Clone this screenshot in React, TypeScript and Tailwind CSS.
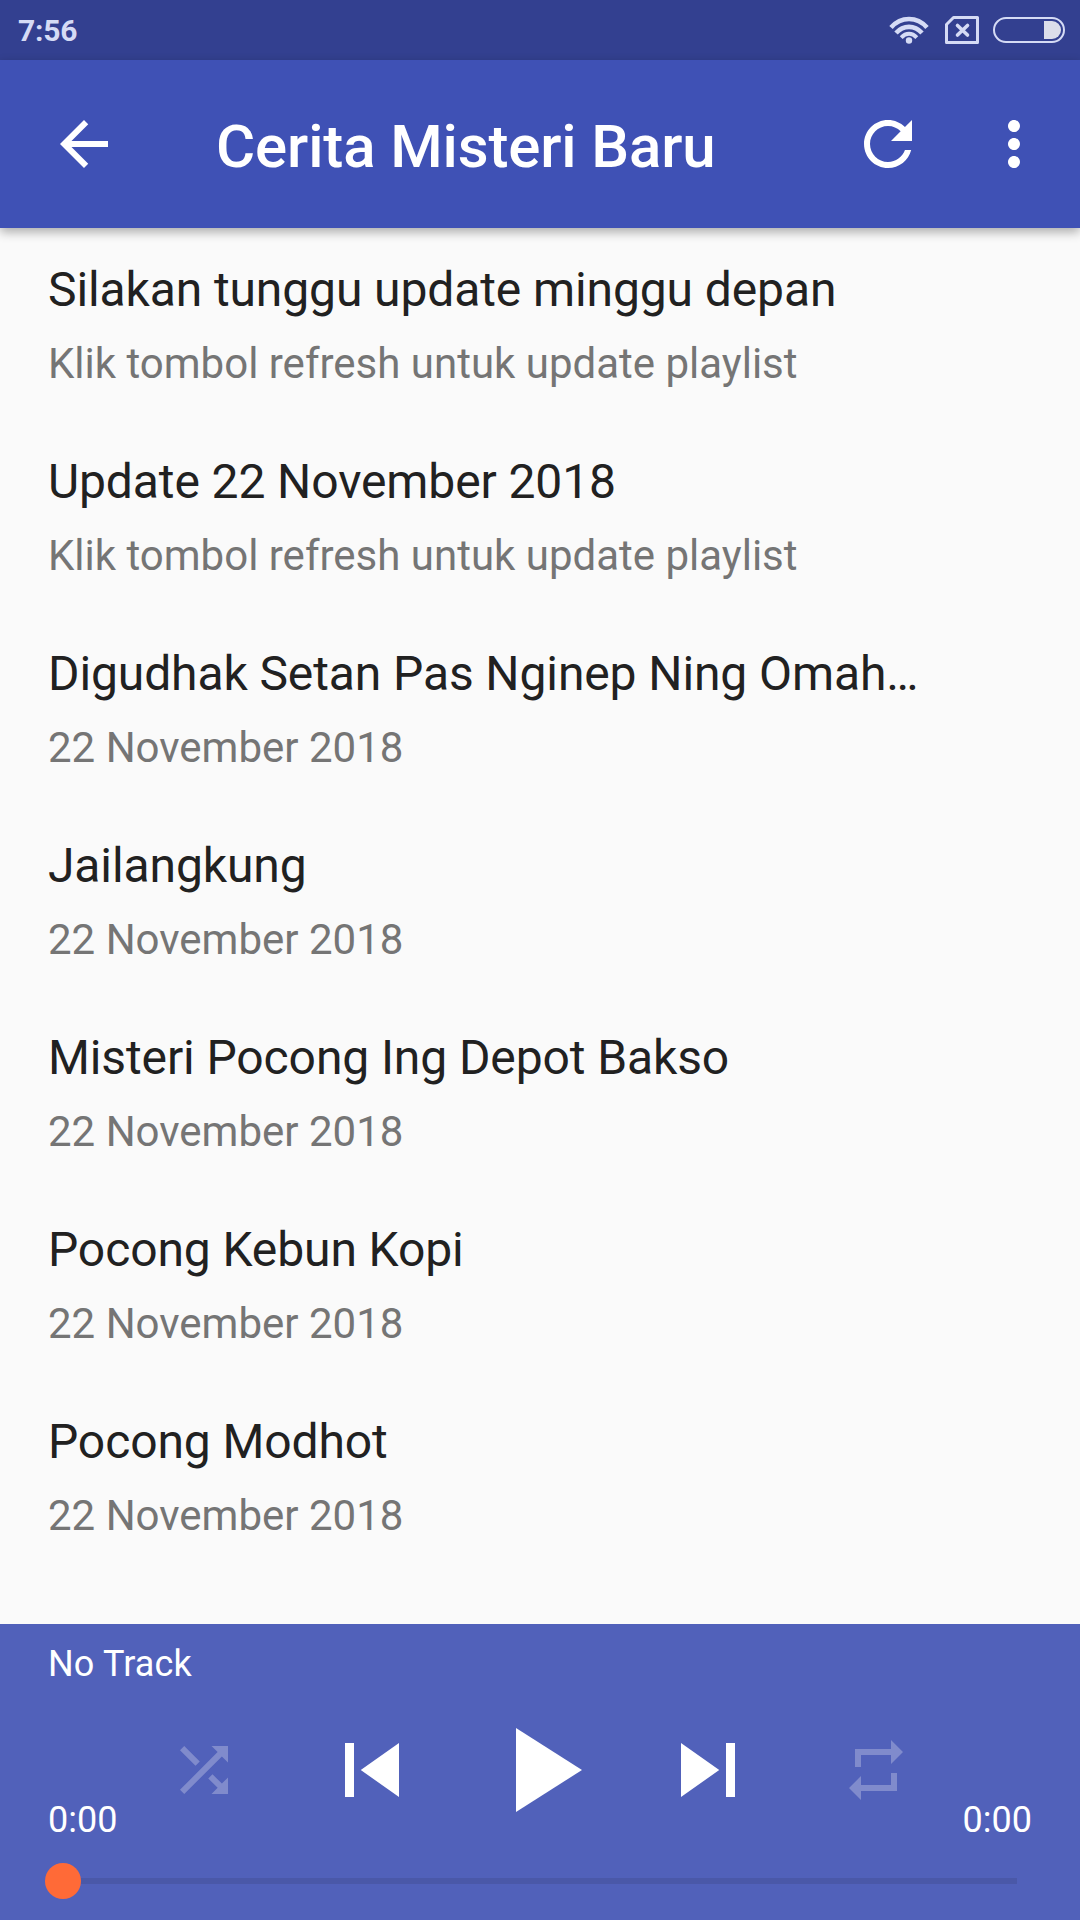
type Track = {
  title: string
  subtitle: string
}

const tracks: Track[] = [
  { title: 'Silakan tunggu update minggu depan', subtitle: 'Klik tombol refresh untuk update playlist' },
  { title: 'Update 22 November 2018', subtitle: 'Klik tombol refresh untuk update playlist' },
  { title: 'Digudhak Setan Pas Nginep Ning Omah…', subtitle: '22 November 2018' },
  { title: 'Jailangkung', subtitle: '22 November 2018' },
  { title: 'Misteri Pocong Ing Depot Bakso', subtitle: '22 November 2018' },
  { title: 'Pocong Kebun Kopi', subtitle: '22 November 2018' },
  { title: 'Pocong Modhot', subtitle: '22 November 2018' },
]

const icons = {
  back: 'M20 11H7.83l5.59-5.59L12 4l-8 8 8 8 1.41-1.41L7.83 13H20v-2z',
  refresh:
    'M17.65 6.35C16.2 4.9 14.21 4 12 4c-4.42 0-7.99 3.58-7.99 8s3.57 8 7.99 8c3.73 0 6.84-2.55 7.73-6h-2.08c-.82 2.33-3.04 4-5.65 4-3.31 0-6-2.69-6-6s2.69-6 6-6c1.66 0 3.14.69 4.22 1.78L13 11h7V4l-2.35 2.35z',
  more: 'M12 8c1.1 0 2-.9 2-2s-.9-2-2-2-2 .9-2 2 .9 2 2 2zm0 2c-1.1 0-2 .9-2 2s.9 2 2 2 2-.9 2-2-.9-2-2-2zm0 6c-1.1 0-2 .9-2 2s.9 2 2 2 2-.9 2-2-.9-2-2-2z',
  shuffle:
    'M10.59 9.17L5.41 4 4 5.41l5.17 5.17 1.42-1.41zM14.5 4l2.04 2.04L4 18.59 5.41 20 17.96 7.46 20 9.5V4h-5.5zm.33 9.41l-1.41 1.41 3.13 3.13L14.5 20H20v-5.5l-2.04 2.04-3.13-3.13z',
  previous: 'M6 6h2v12H6zm3.5 6l8.5 6V6z',
  play: 'M8 5v14l11-7z',
  next: 'M6 18l8.5-6L6 6v12zM16 6v12h2V6h-2z',
  repeat: 'M7 7h10v3l4-4-4-4v3H5v6h2V7zm10 10H7v-3l-4 4 4 4v-3h12v-6h-2v4z',
}

function Icon({ name, className }: { name: keyof typeof icons; className: string }) {
  return (
    <svg viewBox="0 0 24 24" fill="currentColor" className={className} aria-hidden="true">
      <path d={icons[name]} />
    </svg>
  )
}

function StatusBar() {
  return (
    <div className="flex h-[60px] shrink-0 items-center justify-between bg-[#334090] pr-[15px] pl-[18px] text-[#d5dbf5]">
      <span className="pt-px text-[30px] leading-[36px] font-bold tracking-[-0.2px]">7:56</span>

      <div className="flex items-center">
        <svg width="40" height="30" viewBox="0 0 40 30" fill="none" stroke="currentColor" strokeWidth="4.6" className="mr-4">
          <path d="M2 12.5C12 1.2 28 1.2 38 12.5" />
          <path d="M7 18C14.5 9.8 25.5 9.8 33 18" />
          <path d="M12.2 22.6C17 17.6 23 17.6 27.8 22.6" strokeWidth="4" />
          <circle cx="20" cy="25.5" r="3.2" fill="currentColor" stroke="none" />
        </svg>
        <svg width="34" height="28" viewBox="0 0 34 28" fill="none" stroke="currentColor" strokeWidth="3" className="mr-[14px]">
          <path d="M8.5 1.5h24v25h-31v-18z" strokeLinejoin="round" />
          <path d="M12.5 9.5l10 9.5M22.5 9.5l-10 9.5" strokeWidth="3.6" strokeLinecap="round" />
        </svg>
        <div className="flex h-[26px] w-[72px] items-center justify-end rounded-full border-2 border-current pr-[2px]">
          <div className="h-[18px] w-[17px] rounded-r-full bg-[#dcdeea]" />
        </div>
      </div>
    </div>
  )
}

function Toolbar() {
  return (
    <header className="z-10 flex h-[168px] shrink-0 items-center bg-[#3f51b5] pr-[30px] pl-[48px] text-white shadow-[0_4px_10px_rgba(0,0,0,0.32)]">
      <button type="button" aria-label="Back">
        <Icon name="back" className="size-[72px]" />
      </button>
      <h1 className="ml-24 flex-1 pt-1.5 text-[60px] leading-[70px] font-medium tracking-[-0.13px] whitespace-nowrap">
        Cerita Misteri Baru
      </h1>
      <button type="button" aria-label="Refresh">
        <Icon name="refresh" className="size-[72px]" />
      </button>
      <button type="button" aria-label="More options" className="ml-[54px]">
        <Icon name="more" className="size-[72px]" />
      </button>
    </header>
  )
}

function TrackRow({ title, subtitle }: Track) {
  return (
    <li className="h-[192px] px-12 pt-[34px]">
      <p className="text-[48px] leading-[56px] tracking-[-0.11px] whitespace-nowrap text-[#212121]">{title}</p>
      <p className="mt-[21px] text-[42px] leading-[49px] whitespace-nowrap text-[#757575]">{subtitle}</p>
    </li>
  )
}

function Player() {
  return (
    <footer className="flex h-[296px] shrink-0 flex-col bg-[#5161ba] px-12 pt-[19px] text-[36px] leading-[42px] text-white">
      <p className="tracking-[0.15px]">No Track</p>

      <div className="mt-[13px] flex h-[144px] items-center justify-center">
        <button type="button" aria-label="Shuffle" className="flex w-[168px] justify-center">
          <Icon name="shuffle" className="size-[72px] text-[#808bcc]" />
        </button>
        <button type="button" aria-label="Previous" className="flex w-[168px] justify-center">
          <Icon name="previous" className="size-[108px]" />
        </button>
        <button type="button" aria-label="Play" className="flex w-[168px] justify-center">
          <Icon name="play" className="size-[144px]" />
        </button>
        <button type="button" aria-label="Next" className="flex w-[168px] justify-center">
          <Icon name="next" className="size-[108px]" />
        </button>
        <button type="button" aria-label="Repeat" className="flex w-[168px] justify-center">
          <Icon name="repeat" className="size-[72px] text-[#808bcc]" />
        </button>
      </div>

      <div className="-mt-[43px] flex justify-between">
        <span>0:00</span>
        <span>0:00</span>
      </div>

      <div className="mt-[22px] -ml-[3px] flex items-center pr-[15px]">
        <span className="size-9 rounded-full bg-[#ff6a37]" />
        <span className="h-[6px] flex-1 bg-[#4a58a8]" />
      </div>
    </footer>
  )
}

export default function App() {
  return (
    <div className="flex h-[1920px] w-[1080px] flex-col overflow-hidden bg-[#fafafa] font-['Roboto',sans-serif]">
      <StatusBar />
      <Toolbar />
      <ul className="min-h-0 flex-1">
        {tracks.map((track) => (
          <TrackRow key={track.title} {...track} />
        ))}
      </ul>
      <Player />
    </div>
  )
}
